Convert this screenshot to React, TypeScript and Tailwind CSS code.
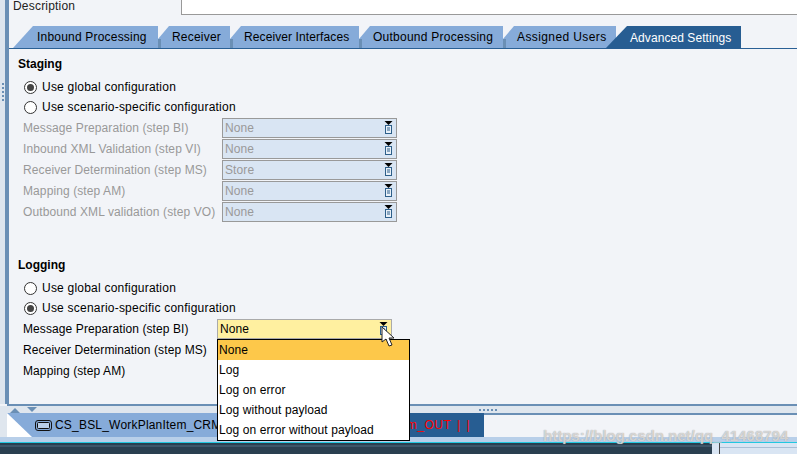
const tabs = [
  { label: "Receiver", w: "w-[72px]", tr: "tracking-[0.2px]" },
  { label: "Receiver Interfaces", w: "w-[129px]", tr: "tracking-[0.1px]" },
  { label: "Outbound Processing", w: "w-[144px]", tr: "tracking-[0.25px]" },
  { label: "Assigned Users", w: "w-[113px]", tr: "tracking-[0.4px]" },
];

const font = "font-['Liberation_Sans',Arial,sans-serif] text-[12px]";

function Radio({ checked, label }: { checked?: boolean; label: string }) {
  return (
    <div className="flex h-5 items-center pl-[24px] tracking-[0.22px]">
      <span className="flex h-[13px] w-[13px] items-center justify-center rounded-full border border-[#333] bg-white">
        {checked && <span className="h-[7px] w-[7px] rounded-full bg-[#444]" />}
      </span>
      <span className="ml-[5px] text-black">{label}</span>
    </div>
  );
}

function ValueHelp() {
  return (
    <svg width="9" height="13" viewBox="0 0 9 13" className="shrink-0">
      <path d="M0.5 0h8L4.5 4z" fill="#000" />
      <rect x="1.5" y="4.5" width="6" height="8" fill="#e8f0f8" stroke="#2d5f8a" />
      <path d="M3 7h3M3 9h3" stroke="#2d5f8a" />
    </svg>
  );
}

function Row({ label, value }: { label: string; value: string }) {
  return (
    <div className="flex h-[21px] items-center pl-[23px] tracking-[0.1px] text-[#999]">
      <span className="w-[199px]">{label}</span>
      <div className="flex h-5 w-[175px] items-center justify-between border border-[#999] bg-[#d9e5f3] pl-[2px] pr-[3px]">
        <span>{value}</span>
        <ValueHelp />
      </div>
    </div>
  );
}

export default function App() {
  return (
    <div className={`relative flex h-[454px] w-[797px] flex-col overflow-hidden bg-[#f2f4f8] ${font}`}>
      <div className="flex h-[404px] shrink-0">
        <div className="flex w-[5px] flex-col items-center gap-[2px] bg-[#dde5ee] pt-[83px]">
          {[0, 1, 2, 3, 4].map((i) => (
            <span key={i} className="h-[2px] w-[2px] bg-[#6a8fb5]" />
          ))}
        </div>
        <div className="w-[4px] bg-[#6a8fb5]" />

        <div className="min-w-0 flex-1">
          <div className="flex h-[15px] items-start">
            <span className="-mt-[3px] w-[172px] pl-[4px] tracking-[0.2px] text-[#222]">Description</span>
            <div className="h-[15px] flex-1 border-b border-l border-[#999] bg-white" />
          </div>

          <div className="mt-[11px] flex h-[23px] items-stretch border-b border-[#2a6095] pl-[4px]">
            <div className="flex h-[22px] w-[145px] items-center bg-[#86abd9] pl-[24px] tracking-[0.2px] text-black [clip-path:polygon(20px_0,100%_0,100%_100%,0_100%)]">
              Inbound Processing
            </div>
            {tabs.map((t) => (
              <div
                key={t.label}
                className={`relative flex h-[22px] items-center bg-[#86abd9] pl-[14px] text-black [clip-path:polygon(11px_0,100%_0,100%_100%,0_100%,0_13px)] ${t.w} ${t.tr}`}
              >
                <span className="absolute bottom-0 left-0 h-[9px] w-[3px] bg-[#6a8fb5]" />
                {t.label}
              </div>
            ))}
            <div className="-ml-[11px] flex h-[23px] w-[136px] items-center bg-[#275d92] pl-[25px] tracking-[0.07px] text-white [clip-path:polygon(22px_0,100%_0,100%_100%,0_100%)]">
              Advanced Settings
            </div>
          </div>

          <div className="pl-[9px] pt-[6px] font-bold text-black">Staging</div>
          <div className="mt-[4px] -ml-[9px]">
            <Radio checked label="Use global configuration" />
            <Radio label="Use scenario-specific configuration" />
          </div>
          <div className="-ml-[9px]">
            <Row label="Message Preparation (step BI)" value="None" />
            <Row label="Inbound XML Validation (step VI)" value="None" />
            <Row label="Receiver Determination (step MS)" value="Store" />
            <Row label="Mapping (step AM)" value="None" />
            <Row label="Outbound XML validation (step VO)" value="None" />
          </div>

          <div className="mt-[34px] pl-[9px] font-bold text-black">Logging</div>
          <div className="mt-[4px] -ml-[9px]">
            <Radio label="Use global configuration" />
            <Radio checked label="Use scenario-specific configuration" />
          </div>
          <div className="-ml-[9px] tracking-[0.1px] text-black">
            <div className="flex h-[21px] items-center pl-[23px]">
              <span className="w-[194px]">Message Preparation (step BI)</span>
              <div className="flex h-5 w-[175px] items-center justify-between border border-[#aaa] bg-[#fff0a0] pl-[2px] pr-[3px]">
                <span>None</span>
                <ValueHelp />
              </div>
            </div>
            <div className="flex h-[21px] items-center pl-[23px]">Receiver Determination (step MS)</div>
            <div className="flex h-[21px] items-center pl-[23px]">Mapping (step AM)</div>
          </div>
        </div>
      </div>

      <div className="ml-[7px] h-[2px] shrink-0 bg-[#6a8fb5]" />
      <div className="relative flex h-[7px] shrink-0 items-center bg-[#dfe6ee] pl-[10px]">
        <svg width="28" height="6" viewBox="0 0 28 6">
          <path d="M0 6l5-5 5 5z" fill="#6a8fb5" />
          <path d="M17 0h10l-5 5z" fill="#6a8fb5" />
        </svg>
        <div className="ml-[441px] flex gap-[2px]">
          {[0, 1, 2, 3, 4].map((i) => (
            <span key={i} className="h-[2px] w-[2px] bg-[#6a8fb5]" />
          ))}
        </div>
      </div>

      <div className="flex h-[24px] shrink-0 bg-[#dfe6ee] pl-[7px]">
        <div className="h-[24px] w-[403px] bg-white">
          <div className="flex h-[24px] items-center bg-[#86abd9] pl-[28px] [clip-path:polygon(0_0,100%_0,100%_100%,25px_100%)]">
            <svg width="17" height="11" viewBox="0 0 17 11" className="mr-[3px] shrink-0">
              <rect x="0.5" y="0.5" width="16" height="10" rx="2.5" fill="#86abd9" stroke="#111" />
              <rect x="2.5" y="2.5" width="12" height="6" rx="1" fill="#b9cfe9" stroke="#111" />
            </svg>
            <span className="whitespace-nowrap tracking-[0.2px] text-black">CS_BSL_WorkPlanItem_CRM</span>
          </div>
        </div>
        <div className="flex h-[24px] w-[74px] items-center justify-end bg-[#275d92] pr-[14px] text-[#ff0000]">
          <span className="whitespace-nowrap tracking-[0.5px] [word-spacing:2px]">em_OUT | |</span>
        </div>
        <div className="flex-1 border-t-2 border-[#6a8fb5] bg-[#f2f4f8]" />
      </div>

      <div className="h-[5px] shrink-0 bg-[#b8cfe9]" />
      <div className="h-[1px] shrink-0 bg-[#22c8e0]" />
      <div className="flex flex-1">
        <div className="w-[712px] bg-[#2a3f50]">
          <div className="mt-[2px] h-[2px] bg-[#3d5568]" />
        </div>
        <div className="w-[7px] bg-[#d9e5f3]" />
        <div className="w-[1px] bg-[#444]" />
        <div className="flex-1 bg-[#d9e5f3]">
          <div className="mt-[4px] h-[1px] bg-[#a9bfd6]" />
        </div>
      </div>

      <div className="absolute left-[217px] top-[339px] w-[193px] border border-black bg-white tracking-[0.1px] text-black">
        <div className="flex h-5 items-center bg-[#fdc84a] pl-[1px]">None</div>
        <div className="flex h-5 items-center pl-[1px]">Log</div>
        <div className="flex h-5 items-center pl-[1px]">Log on error</div>
        <div className="flex h-5 items-center pl-[1px]">Log without payload</div>
        <div className="flex h-5 items-center pl-[1px]">Log on error without payload</div>
      </div>

      <svg width="14" height="22" viewBox="0 0 14 22" className="absolute left-[381px] top-[326px]">
        <path d="M1 1v15l4-3 3 7 3-1-3-7h5z" fill="#fff" stroke="#222" strokeWidth="1" />
      </svg>

      <div className="absolute left-[543px] top-[425px] whitespace-nowrap text-[15px] font-bold text-white/60 [text-shadow:0_0_1px_#8a8a8a]">
        https://blog.csdn.net/qq_41468794
      </div>
    </div>
  );
}
